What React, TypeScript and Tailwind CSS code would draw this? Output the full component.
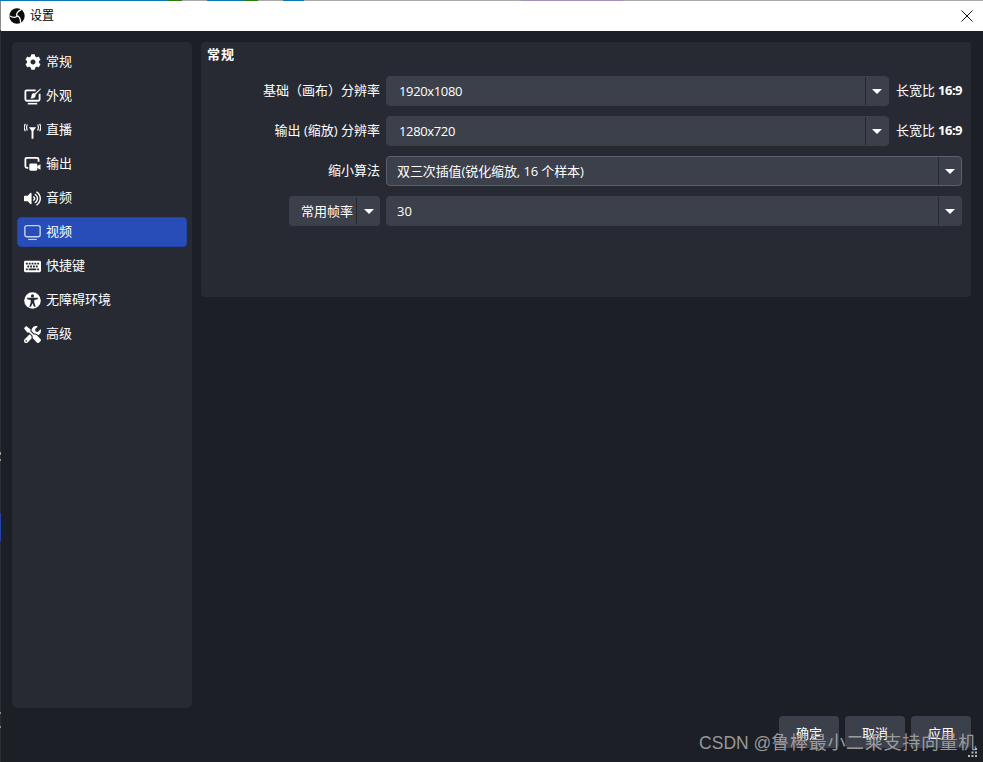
import { FaCog, FaKeyboard, FaTools, FaVolumeUp } from "react-icons/fa"

const cjk = "font-['Open_Sans','Noto_Sans_CJK_SC',sans-serif]"

function ObsLogo() {
  const arm = "M8 8C6.600 6.800 6.400 4.200 9.600 .600"
  return (
    <svg viewBox="0 0 16 16" className="w-[16px] h-[16px]">
      <circle cx="8" cy="8" r="7.700" fill="#0b0b0b" />
      <g fill="none" stroke="#fff" strokeWidth="1.300">
        <path d={arm} transform="rotate(20 8 8)" />
        <path d={arm} transform="rotate(140 8 8)" />
        <path d={arm} transform="rotate(260 8 8)" />
      </g>
    </svg>
  )
}

function AppearanceIcon() {
  return (
    <svg viewBox="0 0 16 16" className="w-[17px] h-[17px]" fill="none">
      <path d="M11 2.200H2.600a1.300 1.300 0 0 0-1.300 1.300v7.200a1.300 1.300 0 0 0 1.300 1.300h10.800a1.300 1.300 0 0 0 1.300-1.300V5.400" stroke="#fff" strokeWidth="1.700" />
      <path d="M15.400.400l.6.600-5.200 5.400-1-1z" fill="#fff" />
      <path d="M9.600 4.800l1.400 1.500c.2 2.600-2.200 4-5 3.300 1-.6.800-1.400 1-2.400.3-1.400 1.400-2.500 2.600-2.400z" fill="#fff" />
      <rect x="3.600" y="14" width="8.800" height="1.500" fill="#fff" />
    </svg>
  )
}

function StreamIcon() {
  return (
    <svg viewBox="0 0 16 16" className="w-[17px] h-[17px]" fill="none">
      <path d="M4.600 5h6.800L8.900 8.400v7.400H7.100V8.400z" fill="#fff" />
      <path d="M3.200 2.400c-1 1.800-1 3.800 0 5.600M1.300 1.800c-1.500 2.400-1.500 4.600 0 6.800M12.800 2.400c1 1.800 1 3.800 0 5.600M14.700 1.800c1.500 2.400 1.500 4.600 0 6.800" stroke="#fff" strokeWidth="1.100" />
    </svg>
  )
}

function OutputIcon() {
  return (
    <svg viewBox="0 0 16 16" className="w-[17px] h-[17px]" fill="none">
      <path d="M4 11.200H2.800a1.500 1.500 0 0 1-1.500-1.500V3.300a1.500 1.500 0 0 1 1.500-1.500h9.400a1.500 1.500 0 0 1 1.500 1.500v2" stroke="#fff" strokeWidth="1.700" />
      <rect x="5" y="7" width="7.500" height="6.800" rx="1.300" fill="#fff" />
      <path d="M12.500 9.500l3-1.700v5.100l-3-1.700z" fill="#fff" />
    </svg>
  )
}

function VideoIcon() {
  return (
    <svg viewBox="0 0 16 16" className="w-[17px] h-[17px]" fill="none">
      <rect x=".8" y="1.500" width="14.400" height="10.500" rx="1.800" stroke="#c9d3ee" strokeWidth="1.300" />
      <rect x="4" y="14" width="8" height="1.100" fill="#c9d3ee" />
    </svg>
  )
}

function AccessIcon() {
  return (
    <svg viewBox="0 0 16 16" className="w-[17px] h-[17px]">
      <circle cx="8" cy="8" r="7.800" fill="#fff" />
      <circle cx="8" cy="3.700" r="1.500" fill="#272a33" />
      <path d="M3 5.400h10v1.500l-3.300.7v2.200l1.300 4h-1.500L8 10.600l-1.500 3.200H5l1.300-4V7.600L3 6.900z" fill="#272a33" />
    </svg>
  )
}

function Arrow() {
  return <span className="w-0 h-0 border-x-[5px] border-x-transparent border-t-[5px] border-t-white" />
}

function Combo({ value, className = "", textClass = "pl-[12px]", focus = false }: { value: string; className?: string; textClass?: string; focus?: boolean }) {
  return (
    <div className={`h-[30px] flex items-center rounded-[4px] bg-[#3c404b] border ${focus ? "border-[#5b6070]" : "border-[#3c404b]"} ${className}`}>
      <span className={`flex-1 pt-[1px] text-[13px] text-white ${textClass}`}>{value}</span>
      <span className="w-[23px] h-[28px] border-l border-[#252730] flex items-center justify-center">
        <Arrow />
      </span>
    </div>
  )
}

function Aspect() {
  return (
    <span className="w-[66px] ml-[7px] text-[13px] text-white whitespace-nowrap">
      长宽比<b className="ml-[3px] font-bold tracking-[-0.5px]">16:9</b>
    </span>
  )
}

const navItems = [
  { label: "常规", icon: <FaCog size={16} color="#fff" /> },
  { label: "外观", icon: <AppearanceIcon /> },
  { label: "直播", icon: <StreamIcon /> },
  { label: "输出", icon: <OutputIcon /> },
  { label: "音频", icon: <FaVolumeUp size={17} color="#fff" /> },
  { label: "视频", icon: <VideoIcon />, active: true },
  { label: "快捷键", icon: <FaKeyboard size={17} color="#fff" /> },
  { label: "无障碍环境", icon: <AccessIcon /> },
  { label: "高级", icon: <FaTools size={17} color="#fff" /> },
]

function Grip() {
  return (
    <svg viewBox="0 0 10 10" className="absolute right-[5px] bottom-[4px] w-[10px] h-[10px]" fill="#b8b8b8">
      <rect x="7" y="0" width="2" height="2" />
      <rect x="3.500" y="3.500" width="2" height="2" />
      <rect x="7" y="3.500" width="2" height="2" />
      <rect x="0" y="7" width="2" height="2" />
      <rect x="3.500" y="7" width="2" height="2" />
      <rect x="7" y="7" width="2" height="2" />
    </svg>
  )
}

export default function App() {
  return (
    <div className={`relative w-[983px] h-[762px] overflow-hidden flex flex-col bg-[#1d1f27] ${cjk}`}>
      {/* what peeks out above the window */}
      <div className="h-px flex shrink-0 bg-[#aaaaaa]">
        <div className="w-[168px] bg-[#0a78b4]" />
        <div className="w-[14px] bg-[#2b7a0b]" />
        <div className="w-[25px]" />
        <div className="w-[37px] bg-[#0a78b4]" />
        <div className="w-[14px] bg-[#2b7a0b]" />
        <div className="w-[25px]" />
        <div className="w-[21px] bg-[#0a78b4]" />
        <div className="w-[217px]" />
        <div className="w-[102px] bg-[#a58fbc]" />
      </div>

      <div className="flex flex-1 min-h-0">
        <div className="w-px shrink-0 bg-[#2b2d33] flex flex-col">
          <div className="h-[29px] bg-[#8a8a8a]" />
          <div className="h-[422px]" />
          <div className="h-[3px] bg-[#9a9a9a]" />
          <div className="h-[4px]" />
          <div className="h-[2px] bg-[#9a9a9a]" />
          <div className="h-[52px]" />
          <div className="h-[28px] bg-[#1f46a8]" />
          <div className="h-[171px]" />
          <div className="h-[2px] bg-[#8a8a8a]" />
          <div className="h-[12px]" />
          <div className="h-[2px] bg-[#8a8a8a]" />
        </div>

        <div className="flex-1 min-w-0 flex flex-col">
          <div className="h-[30px] shrink-0 bg-white flex items-center pl-[8px] pr-[10px]">
            <ObsLogo />
            <span className="ml-[5px] text-[12px] text-black">设置</span>
            <svg viewBox="0 0 12 12" className="ml-auto w-[12px] h-[12px]" stroke="#111" strokeWidth="1" fill="none">
              <path d="M.500.500l11 11M11.500.500l-11 11" />
            </svg>
          </div>

          <div className="flex-1 min-h-0 flex flex-col pt-[11px] pl-[11px] pr-[12px]">
            <div className="flex gap-[9px] h-[666px] shrink-0">
              <aside className="w-[180px] rounded-[5px] bg-[#272a33] pt-[5px] px-[5px]">
                {navItems.map((item) => (
                  <div
                    key={item.label}
                    className={`h-[30px] mb-[4px] flex items-center pl-[6px] rounded-[4px] border ${item.active ? "bg-[#284cb8] border-[#2444a6]" : "border-transparent"}`}
                  >
                    <span className="w-[17px] h-[17px] flex items-center justify-center shrink-0">{item.icon}</span>
                    <span className="ml-[5px] text-[13px] text-white">{item.label}</span>
                  </div>
                ))}
              </aside>

              <div className="flex-1 min-w-0">
                <section className="h-[255px] rounded-[4px] bg-[#272a33] pr-[9px]">
                  <h2 className="h-[34px] pl-[6px] pt-[3px] text-[13px] leading-[18px] font-bold tracking-[1px] text-white">常规</h2>
                  <div className="flex flex-col gap-[10px]">
                    <div className="flex items-center">
                      <span className="w-[179px] text-right text-[13px] text-white">基础（画布）分辨率</span>
                      <Combo value="1920x1080" textClass="pl-[12px] tracking-[-0.35px]" className="ml-[6px] flex-1 min-w-0" />
                      <Aspect />
                    </div>
                    <div className="flex items-center">
                      <span className="w-[179px] text-right text-[13px] text-white">输出 (缩放) 分辨率</span>
                      <Combo value="1280x720" textClass="pl-[12px] tracking-[-0.35px]" className="ml-[6px] flex-1 min-w-0" />
                      <Aspect />
                    </div>
                    <div className="flex items-center">
                      <span className="w-[179px] text-right text-[13px] text-white">缩小算法</span>
                      <Combo value="双三次插值(锐化缩放, 16 个样本)" textClass="pl-[10px] tracking-[-0.1px]" focus className="ml-[6px] flex-1 min-w-0" />
                    </div>
                    <div className="flex items-center">
                      <div className="ml-[88px] w-[91px] h-[30px] flex items-center rounded-[4px] bg-[#3c404b]">
                        <span className="w-[68px] pl-[12px] text-[13px] text-white border-r border-[#252730] leading-[26px]">常用帧率</span>
                        <span className="flex-1 flex justify-center">
                          <Arrow />
                        </span>
                      </div>
                      <Combo value="30" textClass="pl-[10px]" className="ml-[6px] flex-1 min-w-0" />
                    </div>
                  </div>
                </section>
              </div>
            </div>

            <div className="flex justify-end gap-[6px] mt-[8px]">
              {["确定", "取消", "应用"].map((b) => (
                <button key={b} className="w-[60px] h-[32px] pt-[3px] rounded-[4px] bg-[#3c404b] text-[13px] text-white">
                  {b}
                </button>
              ))}
            </div>
          </div>
        </div>
      </div>

      {/* csdn watermark */}
      <span className="absolute right-[6px] bottom-[7px] text-[18px] leading-[24px] tracking-[0.7px] text-[#a8a8a8]/90 font-['Liberation_Sans','Noto_Sans_CJK_SC',sans-serif] whitespace-nowrap">
        <span className="text-[17.5px] tracking-[0px]">CSDN @</span>鲁棒最小二乘支持向量机
      </span>
      <Grip />
    </div>
  )
}
